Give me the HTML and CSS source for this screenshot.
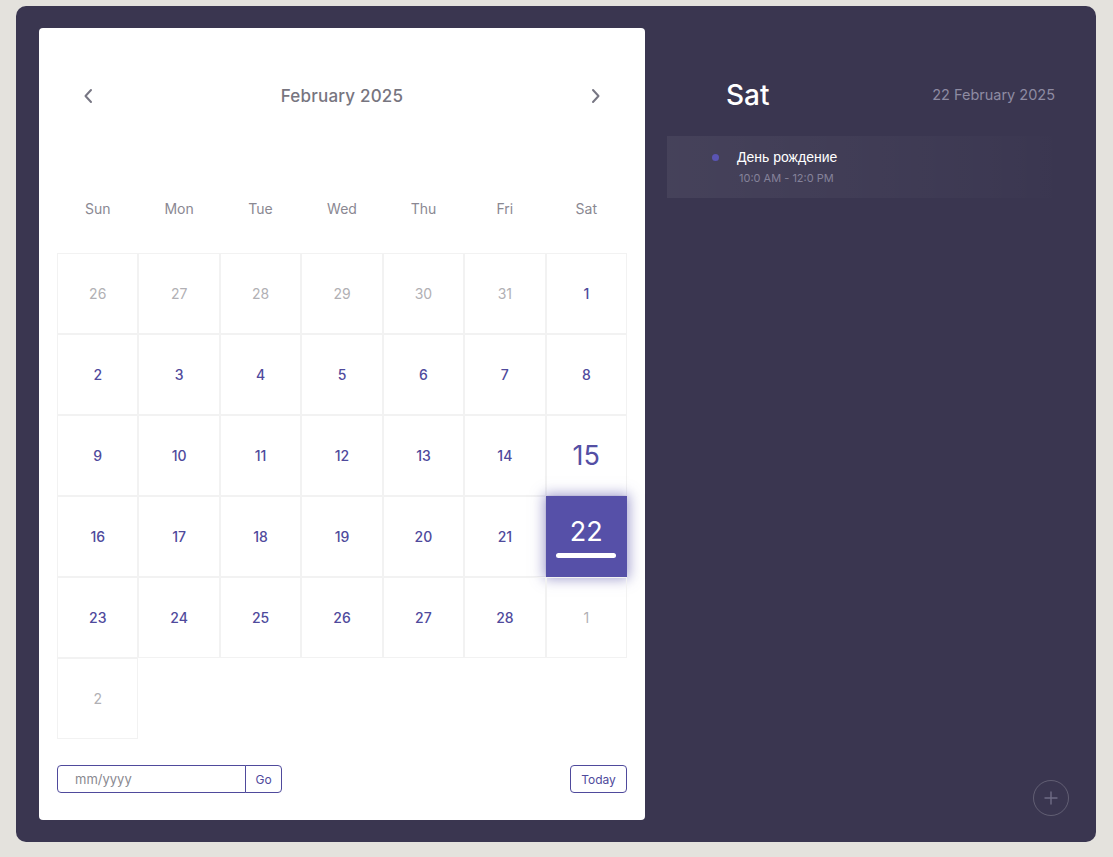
FILE: index.html
```html
<!DOCTYPE html>
<html lang="en">
<head>
<meta charset="utf-8">
<title>Calendar</title>
<link rel="stylesheet" href="styles.css">
</head>
<body>
<div class="panel">
  <section class="card">
    <header class="cal-head">
      <button class="nav" aria-label="Previous month">
        <svg width="10" height="16" viewBox="0 0 10 16"><path d="M8 2 L2.5 8 L8 14" fill="none" stroke="#777683" stroke-width="2" stroke-linecap="round" stroke-linejoin="round"/></svg>
      </button>
      <div class="month">February 2025</div>
      <button class="nav" aria-label="Next month">
        <svg width="10" height="16" viewBox="0 0 10 16"><path d="M2 2 L7.5 8 L2 14" fill="none" stroke="#777683" stroke-width="2" stroke-linecap="round" stroke-linejoin="round"/></svg>
      </button>
    </header>
    <div class="weekdays">
      <span>Sun</span><span>Mon</span><span>Tue</span><span>Wed</span><span>Thu</span><span>Fri</span><span>Sat</span>
    </div>
    <div class="days">
      <div class="day muted">26</div><div class="day muted">27</div><div class="day muted">28</div><div class="day muted">29</div><div class="day muted">30</div><div class="day muted">31</div><div class="day">1</div>
      <div class="day">2</div><div class="day">3</div><div class="day">4</div><div class="day">5</div><div class="day">6</div><div class="day">7</div><div class="day">8</div>
      <div class="day">9</div><div class="day">10</div><div class="day">11</div><div class="day">12</div><div class="day">13</div><div class="day">14</div><div class="day big">15</div>
      <div class="day">16</div><div class="day">17</div><div class="day">18</div><div class="day">19</div><div class="day">20</div><div class="day">21</div><div class="day selected"><span>22</span><i class="bar"></i></div>
      <div class="day">23</div><div class="day">24</div><div class="day">25</div><div class="day">26</div><div class="day">27</div><div class="day">28</div><div class="day muted">1</div>
      <div class="day muted">2</div>
    </div>
    <footer class="cal-foot">
      <div class="goto">
        <input class="goto-input" type="text" placeholder="mm/yyyy">
        <button class="goto-btn">Go</button>
      </div>
      <button class="today-btn">Today</button>
    </footer>
  </section>
  <aside class="events">
    <div class="ev-head">
      <div class="ev-day">Sat</div>
      <div class="ev-date">22 February 2025</div>
    </div>
    <div class="event">
      <div class="ev-title"><i class="dot"></i><span>День рождение</span></div>
      <div class="ev-time">10:0 AM - 12:0 PM</div>
    </div>
    <button class="add" aria-label="Add event">
      <svg width="14" height="14" viewBox="0 0 14 14"><path d="M7 1 V13 M1 7 H13" stroke="#6f6c85" stroke-width="1.4" stroke-linecap="round"/></svg>
    </button>
  </aside>
</div>
</body>
</html>
```
FILE: styles.css
```css
* { box-sizing: border-box; }
html, body { margin: 0; }
body {
  background: #e4e2dd;
  padding: 6px 17px 15px 16px;
  font-family: "Inter", "Open Sans", sans-serif;
}
.panel {
  background: #3a3650;
  border-radius: 10px;
  height: 836px;
  padding: 22px 22px 22px 23px;
  display: flex;
  gap: 22px;
}
.card {
  width: 606px;
  flex: none;
  background: #fff;
  border-radius: 4px;
  padding: 50px 18px 27px 18px;
  display: flex;
  flex-direction: column;
}
.cal-head {
  height: 36px;
  display: flex;
  align-items: center;
  justify-content: space-between;
  padding: 0 26px 0 26px;
}
.nav {
  background: none;
  border: 0;
  padding: 0;
  width: 10px;
  height: 16px;
  display: flex;
}
.month {
  font-size: 17px;
  font-weight: 500;
  color: #77757f;
  letter-spacing: 0.2px;
}
.weekdays {
  margin-top: 79px;
  height: 30px;
  display: grid;
  grid-template-columns: repeat(7, 1fr);
  align-items: center;
  text-align: center;
  font-size: 14px;
  color: #8a8892;
}
.days {
  margin-top: 30px;
  display: grid;
  grid-template-columns: repeat(7, 1fr);
  grid-auto-rows: 81px;
}
.day {
  border: 1px solid #f2f2f2;
  display: flex;
  align-items: center;
  justify-content: center;
  font-size: 14px;
  font-weight: 500;
  color: #4f4a9c;
}
.day.muted { color: #b1b0b4; font-weight: 400; }
.day.big { font-size: 27px; font-weight: 400; color: #544fa4; }
.day.selected {
  flex-direction: column;
  background: #5650a8;
  border-color: #5650a8;
  color: #fff;
  font-size: 27px;
  font-weight: 400;
  box-shadow: 0 0 12px 2px rgba(86, 80, 168, 0.55);
  gap: 6px;
  padding-top: 2px;
}
.day.selected span { line-height: 30px; }
.bar {
  display: block;
  width: 60px;
  height: 5px;
  border-radius: 3px;
  background: #fff;
}
.cal-foot {
  margin-top: 26px;
  height: 28px;
  display: flex;
  justify-content: space-between;
}
.goto { display: flex; }
.goto-input {
  width: 189px;
  height: 28px;
  border: 1px solid #4f4a9c;
  border-radius: 4px 0 0 4px;
  padding: 0 0 0 17px;
  font-family: inherit;
  font-size: 13px;
  color: #555;
  outline: none;
}
.goto-input::placeholder { color: #8a8990; }
.goto-btn, .today-btn {
  height: 28px;
  background: #fff;
  border: 1px solid #4f4a9c;
  font-family: inherit;
  font-size: 12px;
  color: #4f4a9c;
  padding: 0;
}
.goto-btn {
  width: 37px;
  margin-left: -1px;
  border-radius: 0 4px 4px 0;
}
.today-btn {
  width: 57px;
  border-radius: 4px;
}
.events {
  flex: 1;
  display: flex;
  flex-direction: column;
}
.ev-head {
  height: 108px;
  padding: 50px 19px 0 59px;
  display: flex;
  justify-content: space-between;
  align-items: flex-start;
}
.ev-day {
  font-size: 28px;
  font-weight: 500;
  color: #fff;
  line-height: 34px;
}
.ev-date {
  font-size: 14.5px;
  color: #8e8ba2;
  line-height: 34px;
}
.event {
  height: 62px;
  margin-right: 9px;
  background: linear-gradient(90deg, rgba(255,255,255,0.06), rgba(255,255,255,0.015) 80%, rgba(255,255,255,0));
  padding: 12px 0 0 45px;
}
.ev-title {
  display: flex;
  align-items: center;
  gap: 18px;
  font-family: "Liberation Sans", Arial, sans-serif;
  font-size: 14px;
  color: #fff;
  height: 18px;
}
.dot {
  width: 7px;
  height: 7px;
  border-radius: 50%;
  background: #5a54b3;
}
.ev-time {
  margin: 5px 0 0 27px;
  font-size: 11px;
  color: #85829a;
}
.add {
  margin-top: auto;
  align-self: flex-end;
  margin-right: 5px;
  margin-bottom: 4px;
  width: 36px;
  height: 36px;
  border-radius: 50%;
  border: 1px solid rgba(255,255,255,0.2);
  background: transparent;
  display: flex;
  align-items: center;
  justify-content: center;
  padding: 0;
}
```
